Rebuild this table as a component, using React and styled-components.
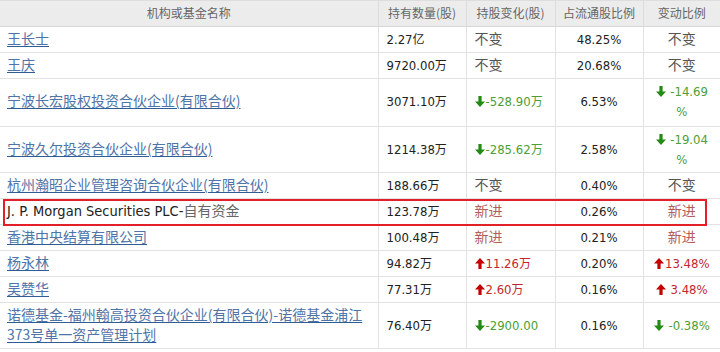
import React from "react";
import styled, { createGlobalStyle } from "styled-components";

const Global = createGlobalStyle`
  html, body { margin: 0; padding: 0; background: #ffffff; }
  body { font-family: "DejaVu Sans Condensed", "Liberation Sans", "Noto Sans CJK SC", sans-serif; }
`;

const Wrap = styled.div`
  position: relative;
  width: 720px;
`;

const Table = styled.table`
  width: 720px;
  border-collapse: collapse;
  table-layout: fixed;
`;

const HeadCell = styled.th`
  background: #ececec;
  color: #666666;
  font-family: "Noto Sans CJK SC", sans-serif;
  font-size: 12px;
  font-weight: 400;
  line-height: 20px;
  height: 20px;
  padding: 2px 4px 3px;
  text-align: center;
  border-top: 1px solid #dedede;
  border-bottom: 1px solid #d6d6d6;
  border-left: 1px solid #dddddd;
  &:first-child { border-left: none; }
`;

const Cell = styled.td`
  padding: 3px ${(p) => (p.$first ? "7px" : "8px")} ${(p) => (p.$tall ? "4px" : "2px")};
  line-height: 20px;
  font-size: 13px;
  color: #222222;
  text-align: ${(p) => p.$align || "left"};
  border-bottom: 1px solid #e2e2e2;
  border-left: 1px solid #e2e2e2;
  vertical-align: middle;
  &:first-child { border-left: none; }
`;

const NameLink = styled.a`
  font-family: "Noto Sans CJK SC", sans-serif;
  font-size: 14px;
  line-height: 14px;
  color: #4f74a8;
  text-decoration: underline;
  text-decoration-color: #2f5d94;
  text-underline-offset: 2px;
  cursor: pointer;
`;

const Plain = styled.span`
  font-size: 14.5px;
  line-height: 14px;
  color: #222222;
`;

const PlainCjk = styled.span`
  font-family: "Noto Sans CJK SC", sans-serif;
  font-size: 14px;
  line-height: 14px;
  color: #666666;
`;

const Unit = styled.span`
  font-family: "Noto Sans CJK SC", sans-serif;
  font-size: 12px;
  line-height: 12px;
  color: inherit;
`;

const Word = styled.span`
  font-family: "Noto Sans CJK SC", sans-serif;
  font-size: 14px;
  line-height: 14px;
  color: ${(p) => (p.$tone === "new" ? "#b35d5c" : "#555555")};
`;

const Delta = styled.span`
  color: ${(p) => (p.$up ? "#c3262b" : "#4c9e35")};
  white-space: nowrap;
`;

const Highlight = styled.div`
  position: absolute;
  left: 3px;
  top: 199px;
  width: 704px;
  height: 27px;
  box-sizing: border-box;
  border: 2px solid #e3202a;
  pointer-events: none;
`;

const Arrow = ({ up }) => (
  <svg
    width="10"
    height="11"
    viewBox="0 0 10 11"
    style={{ verticalAlign: "-1px", marginRight: "1px" }}
  >
    {up ? (
      <polygon points="5,0 10,5.5 6.6,5.5 6.6,11 3.4,11 3.4,5.5 0,5.5" fill="#c40000" />
    ) : (
      <polygon points="3.4,0 6.6,0 6.6,5.5 10,5.5 5,11 0,5.5 3.4,5.5" fill="#238a14" />
    )}
  </svg>
);

const rows = [
  { name: "王长士", qty: "2.27", unit: "亿", chg: { t: "same" }, pct: "48.25%", ratio: { t: "same" } },
  { name: "王庆", qty: "9720.00", unit: "万", chg: { t: "same" }, pct: "20.68%", ratio: { t: "same" } },
  {
    name: "宁波长宏股权投资合伙企业(有限合伙)", qty: "3071.10", unit: "万",
    chg: { t: "down", v: "-528.90", u: "万" }, pct: "6.53%",
    ratio: { t: "down", v: "-14.69", wrap: "%", space: true }, tall: true,
  },
  {
    name: "宁波久尔投资合伙企业(有限合伙)", qty: "1214.38", unit: "万",
    chg: { t: "down", v: "-285.62", u: "万" }, pct: "2.58%",
    ratio: { t: "down", v: "-19.04", wrap: "%", space: true },
  },
  { name: "杭州瀚昭企业管理咨询合伙企业(有限合伙)", qty: "188.66", unit: "万", chg: { t: "same" }, pct: "0.40%", ratio: { t: "same" } },
  { name: "J. P. Morgan Securities PLC-", cjk: "自有资金", plain: true, qty: "123.78", unit: "万", chg: { t: "new" }, pct: "0.26%", ratio: { t: "new" } },
  { name: "香港中央结算有限公司", qty: "100.48", unit: "万", chg: { t: "new" }, pct: "0.21%", ratio: { t: "new" } },
  { name: "杨永林", qty: "94.82", unit: "万", chg: { t: "up", v: "11.26", u: "万" }, pct: "0.20%", ratio: { t: "up", v: "13.48%" } },
  { name: "吴赞华", qty: "77.31", unit: "万", chg: { t: "up", v: "2.60", u: "万" }, pct: "0.16%", ratio: { t: "up", v: "3.48%", space: true } },
  {
    name: "诺德基金-福州翰高投资合伙企业(有限合伙)-诺德基金浦江", name2: "373号单一资产管理计划",
    qty: "76.40", unit: "万", chg: { t: "down", v: "-2900.00" }, pct: "0.16%",
    ratio: { t: "down", v: "-0.38%", space: true },
  },
];

const Change = ({ c }) => {
  if (c.t === "same") return <Word>不变</Word>;
  if (c.t === "new") return <Word $tone="new">新进</Word>;
  const up = c.t === "up";
  return (
    <Delta $up={up}>
      <Arrow up={up} />
      {c.space ? " " : ""}
      {c.v}
      {c.u && <Unit>{c.u}</Unit>}
      {c.wrap && (
        <>
          <br />
          {c.wrap}
        </>
      )}
    </Delta>
  );
};

export default function App() {
  return (
    <Wrap>
      <Global />
      <Table>
        <colgroup>
          <col style={{ width: "378px" }} />
          <col style={{ width: "88px" }} />
          <col style={{ width: "89px" }} />
          <col style={{ width: "88px" }} />
          <col style={{ width: "77px" }} />
        </colgroup>
        <thead>
          <tr>
            <HeadCell>机构或基金名称</HeadCell>
            <HeadCell>持有数量(股)</HeadCell>
            <HeadCell>持股变化(股)</HeadCell>
            <HeadCell>占流通股比例</HeadCell>
            <HeadCell>变动比例</HeadCell>
          </tr>
        </thead>
        <tbody>
          {rows.map((r, i) => (
            <tr key={i}>
              <Cell $first $tall={r.tall}>
                {r.plain ? (
                  <>
                    <Plain>{r.name}</Plain>
                    <PlainCjk>{r.cjk}</PlainCjk>
                  </>
                ) : (
                  <NameLink>
                    {r.name}
                    {r.name2 && (
                      <>
                        <br />
                        {r.name2}
                      </>
                    )}
                  </NameLink>
                )}
              </Cell>
              <Cell $tall={r.tall}>
                {r.qty}
                <Unit>{r.unit}</Unit>
              </Cell>
              <Cell $tall={r.tall}>
                <Change c={r.chg} />
              </Cell>
              <Cell $align="center" $tall={r.tall}>{r.pct}</Cell>
              <Cell $align="center" $tall={r.tall}>
                <Change c={r.ratio} />
              </Cell>
            </tr>
          ))}
        </tbody>
      </Table>
      <Highlight />
    </Wrap>
  );
}
